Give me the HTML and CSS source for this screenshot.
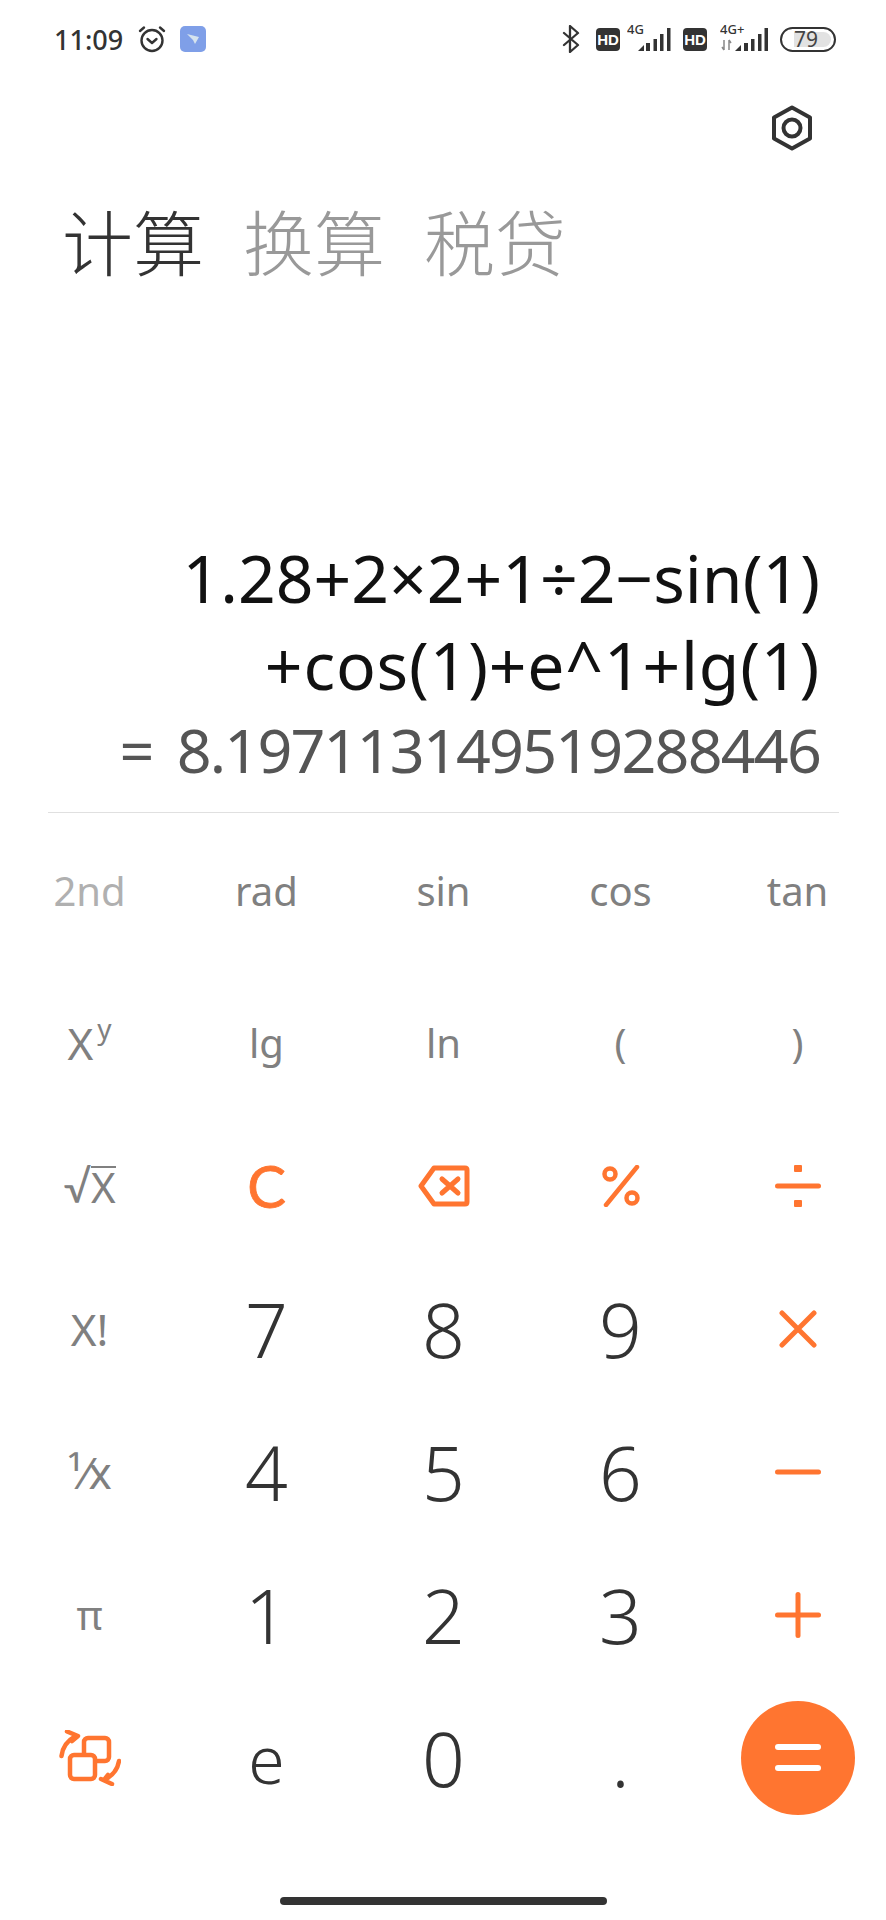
FILE: index.html
```html
<!DOCTYPE html>
<html lang="zh-CN">
<head>
    <meta charset="UTF-8">
    <title>计算器</title>
    <link rel="stylesheet" href="styles.css">
</head>
<body>
<div class="page">
    <!-- status bar -->
    <div class="status">
        <div class="status-left">
            <span class="time">11:09</span>
            <svg class="alarm" width="28" height="28" viewBox="0 0 28 28" fill="none" stroke="#333" stroke-width="2.4" stroke-linecap="round" stroke-linejoin="round">
                <circle cx="14" cy="15.5" r="10.5"/>
                <path d="M2 6 L6 2.5 M26 6 L22 2.5 M9.5 14 L14 18 L18.500 14"/>
            </svg>
            <span class="app-badge">
                <svg width="14" height="12" viewBox="0 0 14 12"><path d="M1 1 L13 4 L9 11 L7 7 Z" fill="#d5e3ee"/></svg>
            </span>
        </div>
        <div class="status-right">
            <svg class="bt" width="18" height="28" viewBox="0 0 18 28" fill="none" stroke="#333" stroke-width="2.300" stroke-linecap="round" stroke-linejoin="round">
                <path d="M2 8 L16 20 L8 27 V1 L16 8 L2 20"/>
            </svg>
            <svg class="hd" width="24" height="23" viewBox="0 0 24 23">
                <rect width="24" height="23" rx="4" fill="#333"/>
                <text x="12" y="17" text-anchor="middle" class="hd-text">HD</text>
            </svg>
            <svg class="signal" width="44" height="38" viewBox="0 -4 44 38" fill="#333">
                <text x="0" y="10" class="net-text">4G</text>
                <path d="M11 27 L17 21 V27 Z"/>
                <rect x="19" y="19" width="4" height="8"/>
                <rect x="26.500" y="15" width="3.500" height="12"/>
                <rect x="33" y="10" width="3.500" height="17"/>
                <rect x="40" y="4" width="3.500" height="23"/>
            </svg>
            <svg class="hd hd-second" width="24" height="23" viewBox="0 0 24 23">
                <rect width="24" height="23" rx="4" fill="#333"/>
                <text x="12" y="17" text-anchor="middle" class="hd-text">HD</text>
            </svg>
            <svg class="signal signal-second" width="48" height="38" viewBox="0 -4 48 38" fill="#333">
                <text x="0" y="10" class="net-text">4G+</text>
                <path d="M4 16 V26 M4 26 L2 23 M9 26 V16 M9 16 L11 19" stroke="#888" stroke-width="1.500" fill="none"/>
                <path d="M15 27 L21 21 V27 Z"/>
                <rect x="24" y="19" width="4" height="8"/>
                <rect x="31" y="15" width="3.500" height="12"/>
                <rect x="38" y="10" width="3.500" height="17"/>
                <rect x="44.500" y="4" width="3.500" height="23"/>
            </svg>
            <span class="battery"><span class="battery-fill">79</span></span>
        </div>
    </div>

    <div class="tool-row">
        <svg width="42" height="46" viewBox="0 0 42 46" fill="none" stroke="#333" stroke-width="4" stroke-linejoin="round">
            <path d="M21 2.500 L39 12.500 V33.500 L21 43.500 L3 33.500 V12.500 Z"/>
            <circle cx="21" cy="23" r="8.500"/>
        </svg>
    </div>

    <div class="tabs">
        <span class="tab tab-active">计算</span>
        <span class="tab">换算</span>
        <span class="tab">税贷</span>
    </div>

    <div class="display">
        <div class="expr">1.28+2×2+1÷2−sin(1)</div>
        <div class="expr expr-wide">+cos(1)+e^1+lg(1)</div>
        <div class="result">= 8.197113149519288446</div>
    </div>

    <div class="keys">
        <div class="key key-top fn fn-off">2nd</div>
        <div class="key key-top fn">rad</div>
        <div class="key key-top fn">sin</div>
        <div class="key key-top fn">cos</div>
        <div class="key key-top fn">tan</div>

        <div class="key fn big">X<sup class="pow">y</sup></div>
        <div class="key fn">lg</div>
        <div class="key fn">ln</div>
        <div class="key fn">(</div>
        <div class="key fn">)</div>

        <div class="key fn big"><span class="root">√</span><span class="radicand">X</span></div>
        <div class="key op-text">C</div>
        <div class="key">
            <svg width="52" height="42" viewBox="0 0 52 42" fill="none" stroke="#ff7530" stroke-width="5" stroke-linecap="round" stroke-linejoin="round">
                <path d="M16 3 H47 Q49 3 49 5 V37 Q49 39 47 39 H16 L3 21 Z"/>
                <path d="M24 14 L40 28 M40 14 L24 28"/>
            </svg>
        </div>
        <div class="key">
            <svg width="38" height="42" viewBox="0 0 38 42" fill="none" stroke="#ff7530" stroke-width="4.500" stroke-linecap="round">
                <circle cx="8" cy="9" r="5.500"/>
                <circle cx="30" cy="33" r="5.500"/>
                <path d="M35 2 L4 40"/>
            </svg>
        </div>
        <div class="key">
            <svg width="46" height="42" viewBox="0 0 46 42" fill="#ff7530">
                <rect y="18.500" width="46" height="5" rx="2.500"/>
                <rect x="19" y="0" width="8" height="7" rx="1"/>
                <rect x="19" y="35" width="8" height="7" rx="1"/>
            </svg>
        </div>

        <div class="key fn wide">X!</div>
        <div class="key num">7</div>
        <div class="key num">8</div>
        <div class="key num">9</div>
        <div class="key">
            <svg width="38" height="38" viewBox="0 0 38 38" fill="none" stroke="#ff7530" stroke-width="5" stroke-linecap="round">
                <path d="M3 3 L35 35 M35 3 L3 35"/>
            </svg>
        </div>

        <div class="key fn wide">¹⁄x</div>
        <div class="key num">4</div>
        <div class="key num">5</div>
        <div class="key num">6</div>
        <div class="key">
            <svg width="46" height="6" viewBox="0 0 46 6" fill="#ff7530"><rect width="46" height="5" y="0.500" rx="2.500"/></svg>
        </div>

        <div class="key fn">π</div>
        <div class="key num">1</div>
        <div class="key num">2</div>
        <div class="key num">3</div>
        <div class="key">
            <svg width="46" height="46" viewBox="0 0 46 46" fill="#ff7530">
                <rect y="20.500" width="46" height="5" rx="2.500"/>
                <rect x="20.500" width="5" height="46" rx="2.500"/>
            </svg>
        </div>

        <div class="key">
            <svg width="62" height="56" viewBox="0 0 62 56" fill="none" stroke="#ff7530" stroke-width="4.500" stroke-linecap="round" stroke-linejoin="round">
                <rect x="25" y="8" width="25" height="23" rx="4"/>
                <rect x="11" y="25" width="25" height="24" rx="4" fill="#fff"/>
                <path d="M2.500 26 Q4 13 16 6.500 M8 1.500 L19 6 L13 11"/>
                <path d="M60 31 Q58 44 45 50 M42 49 L53 54 M45 50 L49 45"/>
            </svg>
        </div>
        <div class="key num-small">e</div>
        <div class="key num">0</div>
        <div class="key num">.</div>
        <div class="key">
            <div class="equals"><span class="equals-bar"></span><span class="equals-bar"></span></div>
        </div>
    </div>

    <div class="home-wrap"><div class="home-bar"></div></div>
</div>
</body>
</html>
```

FILE: styles.css
```css
*{
    margin: 0;
    padding: 0;
    box-sizing: border-box;
}
body{
    background: #fff;
    font-family: "Noto Sans", "Noto Sans CJK SC", sans-serif;
    color: #333;
}
.page{
    width: 886px;
    height: 1920px;
    display: flex;
    flex-direction: column;
    overflow: hidden;
}

/* status bar */
.status{
    height: 78px;
    padding: 0 50px 0 54px;
    display: flex;
    justify-content: space-between;
    align-items: center;
}
.status-left,
.status-right{
    display: flex;
    align-items: center;
}
.time{
    font-size: 27px;
    font-weight: 500;
    color: #333;
}
.alarm{
    margin-left: 15px;
}
.app-badge{
    width: 26px;
    height: 26px;
    margin-left: 14px;
    border-radius: 5px;
    background: #7f9fe8;
    display: flex;
    align-items: center;
    justify-content: center;
}
.hd{
    margin-left: 16px;
}
.hd-second{
    margin-left: 12px;
}
.hd-text{
    font-family: "Liberation Sans", sans-serif;
    font-size: 15px;
    font-weight: 700;
    fill: #fff;
}
.signal{
    margin-left: 7px;
}
.signal-second{
    margin-left: 13px;
}
.net-text{
    font-size: 13px;
    font-weight: 500;
}
.battery{
    width: 56px;
    height: 25px;
    margin-left: 12px;
    padding: 3px;
    border: 2.5px solid #333;
    border-radius: 13px;
    display: flex;
    justify-content: flex-end;
}
.battery-fill{
    width: 37px;
    background: #e2e2e2;
    border-radius: 0 8px 8px 0;
    font-size: 21px;
    line-height: 14px;
    color: #444;
}

/* settings + tabs */
.tool-row{
    height: 100px;
    padding-right: 73px;
    display: flex;
    justify-content: flex-end;
    align-items: center;
}
.tabs{
    height: 115px;
    padding: 7px 0 0 62px;
    display: flex;
    align-items: center;
    gap: 39px;
}
.tab{
    font-size: 71px;
    font-weight: 300;
    line-height: 100px;
    color: #999;
    font-family: "Noto Sans CJK SC", sans-serif;
}
.tab-active{
    color: #333;
}

/* expression and result */
.display{
    flex: 1;
    margin: 0 47px 0 48px;
    padding: 0 19px 21px 0;
    text-align: right;
    display: flex;
    flex-direction: column;
    justify-content: flex-end;
    position: relative;
}
.display:after{
    content: "";
    position: absolute;
    left: 0;
    right: 0;
    bottom: 0;
    height: 1px;
    background: #e0e0e0;
}
.expr{
    font-size: 66px;
    line-height: 87px;
    color: #111;
}
.expr-wide{
    letter-spacing: 0.8px;
}
.result{
    font-size: 61px;
    line-height: 84px;
    letter-spacing: -1.8px;
    word-spacing: 10px;
    color: #555;
}

/* keypad */
.keys{
    padding-left: 1px;
    display: grid;
    grid-template-columns: repeat(5, 1fr);
    grid-template-rows: 158px repeat(6, 143px);
}
.key{
    display: flex;
    align-items: center;
    justify-content: center;
}
.key-top{
    padding-bottom: 4px;
}
.fn{
    font-size: 40px;
    color: #808080;
}
.fn-off{
    color: #b0b0b0;
}
.wide{
    font-size: 44px;
}
.big{
    font-size: 44px;
}
.pow{
    font-size: 28px;
    line-height: 1;
    margin-bottom: 30px;
    margin-left: 4px;
}
.root{
    font-family: "Lato", sans-serif;
    font-size: 44px;
}
.radicand{
    border-top: 2px solid #808080;
    line-height: 38px;
    font-size: 42px;
}
.op-text{
    font-family: "Lato", sans-serif;
    font-size: 58px;
    color: #ff7530;
    -webkit-text-stroke: 0.8px #ff7530;
}
.num{
    font-size: 75px;
    font-weight: 300;
    color: #333;
}
.num-small{
    font-size: 66px;
    font-weight: 300;
    color: #333;
}
.equals{
    width: 114px;
    height: 114px;
    border-radius: 50%;
    background: #ff7530;
    display: flex;
    flex-direction: column;
    align-items: center;
    justify-content: center;
    gap: 15px;
}
.equals-bar{
    width: 46px;
    height: 6px;
    border-radius: 3px;
    background: #fff;
}

/* gesture bar */
.home-wrap{
    height: 91px;
    display: flex;
    justify-content: center;
    padding-top: 68px;
}
.home-bar{
    width: 327px;
    height: 8px;
    border-radius: 4px;
    background: #333;
}
```
